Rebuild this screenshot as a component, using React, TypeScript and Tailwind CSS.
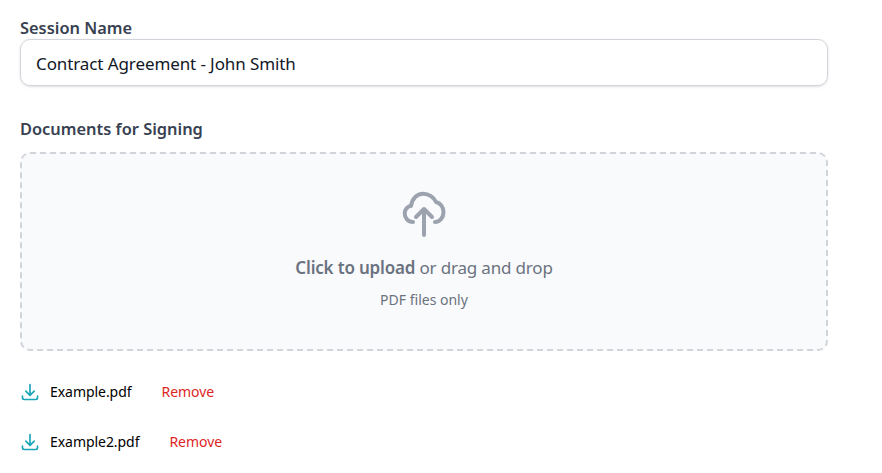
const files = ["Example.pdf", "Example2.pdf"];

export default function App() {
  return (
    <div className="h-[473px] w-[882px] overflow-hidden bg-white pl-5 pt-[17px] font-['Noto_Sans',sans-serif]">
      <div className="w-[808px]">
        <label className="block text-[16.4px] leading-[22px] font-semibold text-[#374151]">Session Name</label>
        <div className="flex h-[47px] items-center rounded-[10px] border border-[#d1d5db] pt-0.5 pl-[15px] text-[17px] tracking-[-0.1px] text-[#111827] shadow-sm">Contract Agreement - John Smith</div>
        <label className="mt-[32px] mb-3 block text-[16.4px] leading-[22px] font-semibold text-[#374151]">Documents for Signing</label>
        <div className="flex h-[199px] flex-col items-center rounded-[10px] border-2 border-dashed border-[#d1d5db] bg-[#f9fafb]">
          <svg className="mt-[37px] h-[48px] w-[48px] text-[#9ca3af]" viewBox="0 0 48 48" fill="none" stroke="currentColor" strokeWidth="4" strokeLinecap="round" strokeLinejoin="round">
            <path d="M24 44V18m-8 8 8-8 8 8" />
            <path d="M13 31C8 31 4.700 27 4.700 22.500 4.700 18 8 15 11 15 12 7.500 17 2.700 23 2.700 29 2.700 34 6.500 36 11 40.500 12 43.500 16.500 43.500 21 43.500 26.500 40 31 35 31" />
          </svg>
          <p className="mt-[16px] text-[17px] leading-[26px] tracking-[-0.18px] text-[#6b7280]"><span className="font-semibold">Click to upload</span> or drag and drop</p>
          <p className="mt-[9px] text-sm leading-5 text-[#6b7280]">PDF files only</p>
        </div>
        <div className="mt-[30px] flex flex-col gap-[28px]">
          {files.map((name) => (
            <div key={name} className="flex h-[22px] items-center text-sm tracking-[-0.05px]">
              <svg className="h-5 w-5 text-[#1ba5b8]" viewBox="0 0 24 24" fill="none" stroke="currentColor" strokeWidth="2" strokeLinecap="round" strokeLinejoin="round">
                <path d="M12 3v13m-5-5 5 5 5-5" />
                <path d="M3 17v2a2 2 0 0 0 2 2h14a2 2 0 0 0 2-2v-2" />
              </svg>
              <span className="ml-[10px] text-black">{name}</span>
              <button className="ml-[30px] text-[#dc2626]">Remove</button>
            </div>
          ))}
        </div>
      </div>
    </div>
  );
}
